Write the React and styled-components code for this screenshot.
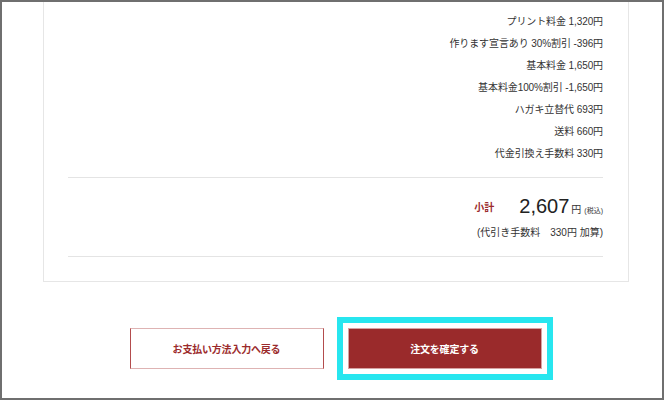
import React from "react";
import styled, { createGlobalStyle } from "styled-components";

const Global = createGlobalStyle`
  html, body { margin: 0; padding: 0; background: #fff; }
  body { font-family: "Liberation Sans", "Noto Sans CJK JP", sans-serif; color: #333; }
  * { box-sizing: border-box; }
`;

const Frame = styled.div`
  width: 664px;
  height: 400px;
  border: 2px solid #6f6f6f;
  overflow: hidden;
  background: #fff;
  display: flex;
  flex-direction: column;
`;

const Card = styled.section`
  margin-left: 41px;
  width: 586px;
  border: 1px solid #e6e6e6;
  border-top: none;
  padding: 9px 25px 24px 24px;
`;

const Items = styled.ul`
  list-style: none;
  margin: 0;
  padding: 0;
  display: flex;
  flex-direction: column;
  align-items: flex-end;
`;

const Item = styled.li`
  font-size: 10px;
  line-height: 22px;
  color: #333;
  letter-spacing: -0.1px;
  font-family: "Liberation Sans", "Noto Sans CJK JP", sans-serif;
  white-space: pre;
`;

const Divider = styled.hr`
  border: none;
  border-top: 1px solid #e4e4e4;
  margin: ${(p) => p.$mt || 0}px 0 0 0;
  height: 0;
`;

const Subtotal = styled.div`
  margin-top: 14px;
  height: 28px;
  display: flex;
  align-items: baseline;
  justify-content: flex-end;
  padding-top: 3px;
`;

const SubLabel = styled.span`
  color: #9b2b2c;
  font-size: 10px;
  font-weight: bold;
  margin-right: 25px;
  position: relative;
  top: -2px;
`;

const Amount = styled.span`
  font-size: 20px;
  color: #222;
  font-family: "Liberation Sans", sans-serif;
  margin-right: 2px;
`;

const Yen = styled.span`
  font-size: 10px;
  color: #333;
  margin-right: 3px;
`;

const Tax = styled.span`
  font-size: 7px;
  color: #333;
`;

const Note = styled.div`
  text-align: right;
  font-size: 10px;
  line-height: 16px;
  margin-top: 5px;
  color: #333;
  white-space: pre;
`;

const Actions = styled.div`
  margin-top: 46px;
  display: flex;
  justify-content: center;
  gap: 24px;
  padding-left: 7px;
`;

const Button = styled.button`
  width: 194px;
  height: 41px;
  font-family: "Noto Sans CJK JP", sans-serif;
  font-size: 10px;
  font-weight: bold;
  letter-spacing: -0.2px;
  cursor: pointer;
  background: ${(p) => (p.$primary ? "#9a2a2b" : "#fff")};
  color: ${(p) => (p.$primary ? "#fff" : "#9b2b2c")};
  border: 1px solid;
  border-color: ${(p) => (p.$primary ? "#d7a3a3" : "#deb3b3 #b34c4d")};
  outline: ${(p) => (p.$focused ? "6px solid #27e6ef" : "none")};
  outline-offset: 5px;
  padding: 0;
`;

const rows = [
  "プリント料金 1,320円",
  "作ります宣言あり 30%割引 -396円",
  "基本料金 1,650円",
  "基本料金100%割引 -1,650円",
  "ハガキ立替代 693円",
  "送料 660円",
  "代金引換え手数料 330円",
];

export default function App() {
  return (
    <>
      <Global />
      <Frame>
        <Card>
          <Items>
            {rows.map((r) => (
              <Item key={r}>{r}</Item>
            ))}
          </Items>
          <Divider $mt={12} />
          <Subtotal>
            <SubLabel>小計</SubLabel>
            <Amount>2,607</Amount>
            <Yen>円</Yen>
            <Tax>(税込)</Tax>
          </Subtotal>
          <Note>(代引き手数料　330円 加算)</Note>
          <Divider $mt={15} />
        </Card>
        <Actions>
          <Button>お支払い方法入力へ戻る</Button>
          <Button $primary $focused>注文を確定する</Button>
        </Actions>
      </Frame>
    </>
  );
}
